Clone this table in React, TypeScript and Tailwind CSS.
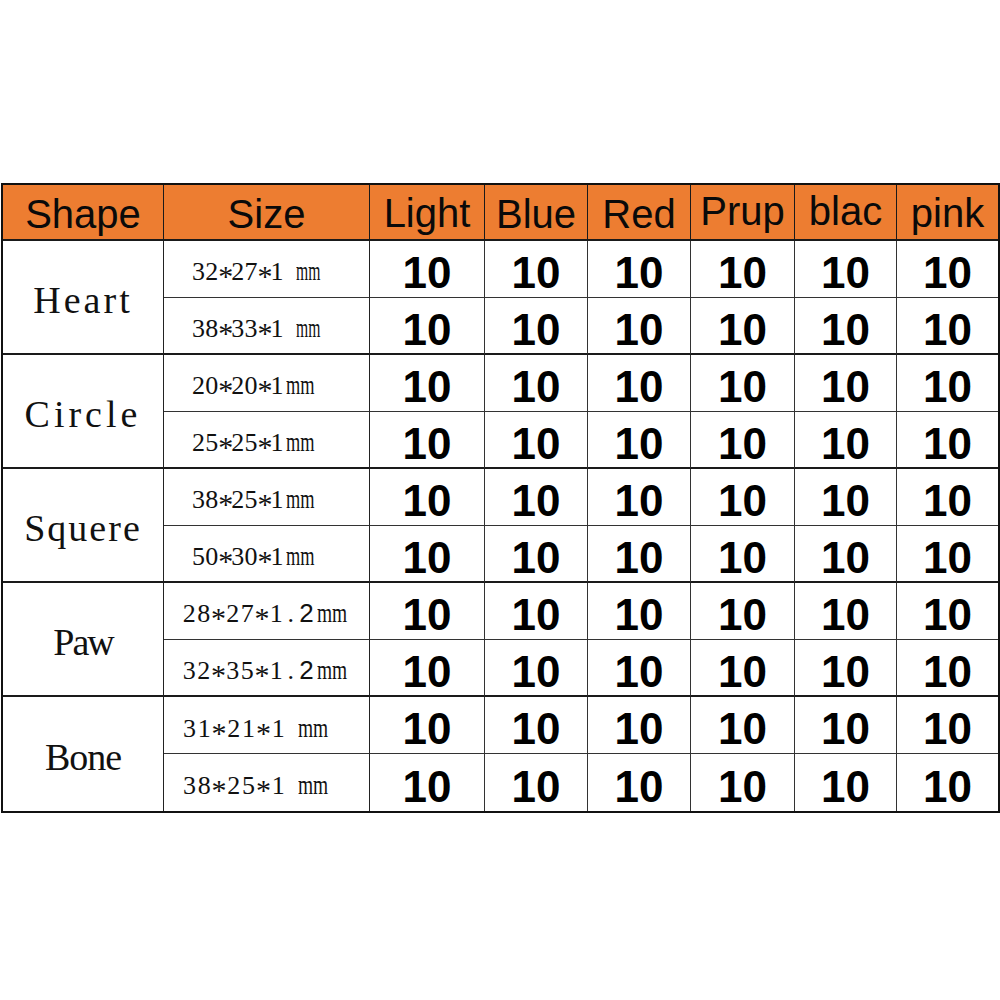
import React from "react";

type SizeRow = {
  t: string;
  tail?: string;
  space: boolean;
  cw: string;
  pl: string;
  mm: string;
  pt: string;
};

type Group = { shape: string; track: string; rows: SizeRow[] };

const groups: Group[] = [
  {
    shape: "Heart",
    track: "tracking-[3px]",
    rows: [
      { t: "32*27*1", space: true, cw: "w-[13.1px]", pl: "pl-[28px]", mm: "scale-x-[0.58]", pt: "pt-[4px]" },
      { t: "38*33*1", space: true, cw: "w-[13.1px]", pl: "pl-[28px]", mm: "scale-x-[0.58]", pt: "pt-[4px]" },
    ],
  },
  {
    shape: "Circle",
    track: "tracking-[4px]",
    rows: [
      { t: "20*20*1", space: false, cw: "w-[13.1px]", pl: "pl-[28px]", mm: "scale-x-[0.68]", pt: "pt-[4px]" },
      { t: "25*25*1", space: false, cw: "w-[13.1px]", pl: "pl-[28px]", mm: "scale-x-[0.68]", pt: "pt-[4px]" },
    ],
  },
  {
    shape: "Squere",
    track: "tracking-[2px]",
    rows: [
      { t: "38*25*1", space: false, cw: "w-[13.1px]", pl: "pl-[28px]", mm: "scale-x-[0.68]", pt: "pt-[4px]" },
      { t: "50*30*1", space: false, cw: "w-[13.1px]", pl: "pl-[28px]", mm: "scale-x-[0.68]", pt: "pt-[4px]" },
    ],
  },
  {
    shape: "Paw",
    track: "tracking-[-2px]",
    rows: [
      { t: "28*27*1.", tail: "2", space: false, cw: "w-[14.5px]", pl: "pl-[18px]", mm: "scale-x-[0.72]", pt: "pt-[4px]" },
      { t: "32*35*1.", tail: "2", space: false, cw: "w-[14.5px]", pl: "pl-[18px]", mm: "scale-x-[0.72]", pt: "pt-[4px]" },
    ],
  },
  {
    shape: "Bone",
    track: "tracking-[-1px]",
    rows: [
      { t: "31*21*1", space: true, cw: "w-[14.8px]", pl: "pl-[18px]", mm: "scale-x-[0.72]", pt: "pt-[5px]" },
      { t: "38*25*1", space: true, cw: "w-[14.8px]", pl: "pl-[18px]", mm: "scale-x-[0.72]", pt: "pt-[5px]" },
    ],
  },
];

const headers: { label: string; pad: string }[] = [
  { label: "Shape", pad: "pt-[4px]" },
  { label: "Size", pad: "pt-[4px]" },
  { label: "Light", pad: "pt-[2px]" },
  { label: "Blue", pad: "pt-[4px]" },
  { label: "Red", pad: "pt-[4px]" },
  { label: "Prup", pad: "pb-[2px]" },
  { label: "blac", pad: "pb-[2px]" },
  { label: "pink", pad: "pt-[2px]" },
];

function Mono({ text, w }: { text: string; w: string }) {
  return (
    <>
      {text.split("").map((c, i) =>
        c === "*" ? (
          <span key={i} className={`inline-block text-center ${w} translate-y-[6px] text-[30px] leading-[26px]`}>
            *
          </span>
        ) : (
          <span key={i} className={`inline-block text-center ${w}`}>
            {c}
          </span>
        )
      )}
    </>
  );
}

export default function App() {
  return (
    <div className="min-h-[1000px] w-[1000px] bg-white pt-[183px] pl-[1px]">
      <div className="grid w-[999px] grid-cols-[161px_206px_115px_103px_103px_104px_102px_101px] grid-rows-[56px_repeat(10,57px)] border-2 border-[#111]">
        {headers.map((h, i) => (
          <div
            key={h.label}
            className={`flex items-center justify-center border-b-2 border-[#1a1a1a] bg-[#ED7D31] ${
              i < 7 ? "border-r" : ""
            } ${h.pad}`}
          >
            <span className="font-['Liberation_Sans',Arial,sans-serif] text-[40px] leading-none text-[#0a0a0a]">
              {h.label}
            </span>
          </div>
        ))}
        {groups.map((g, gi) => {
          const last = gi === groups.length - 1;
          return (
            <React.Fragment key={g.shape}>
              {g.rows.map((r, ri) => {
                const bottom =
                  ri === 0 ? "border-b border-[#333]" : last ? "" : "border-b-2 border-[#1a1a1a]";
                return (
                  <React.Fragment key={ri}>
                    {ri === 0 && (
                      <div
                        className={`row-span-2 flex items-center justify-center border-r border-[#222] pt-[5px] ${
                          last ? "" : "border-b-2 border-b-[#1a1a1a]"
                        }`}
                      >
                        <span
                          className={`font-['Liberation_Serif','Times_New_Roman',serif] text-[38px] leading-none text-[#111] ${g.track}`}
                        >
                          {g.shape}
                        </span>
                      </div>
                    )}
                    <div
                      className={`flex items-center border-r border-r-[#222] ${bottom} ${r.pl} ${r.pt}`}
                    >
                      <span className="whitespace-nowrap font-['Liberation_Serif','Times_New_Roman',serif] text-[26px] leading-none text-[#111]">
                        <Mono text={r.t} w={r.cw} />
                        {r.tail && (
                          <span className="inline-block w-[17px] text-center font-['Liberation_Sans',Arial,sans-serif] text-[26px]">
                            {r.tail}
                          </span>
                        )}
                        {r.space && <span className="inline-block w-[10px]">{"\u00a0"}</span>}
                        <span className="ml-[2px] inline-block w-[26px]">
                          <span className={`inline-block origin-left text-[27px] ${r.mm}`}>mm</span>
                        </span>
                      </span>
                    </div>
                    {[0, 1, 2, 3, 4, 5].map((c) => (
                      <div
                        key={c}
                        className={`flex items-center justify-center pt-[8px] ${bottom} ${
                          c < 5 ? "border-r border-r-[#333]" : ""
                        }`}
                      >
                        <span className="font-['Liberation_Sans',Arial,sans-serif] text-[44px] font-bold leading-none text-black">
                          10
                        </span>
                      </div>
                    ))}
                  </React.Fragment>
                );
              })}
            </React.Fragment>
          );
        })}
      </div>
    </div>
  );
}
